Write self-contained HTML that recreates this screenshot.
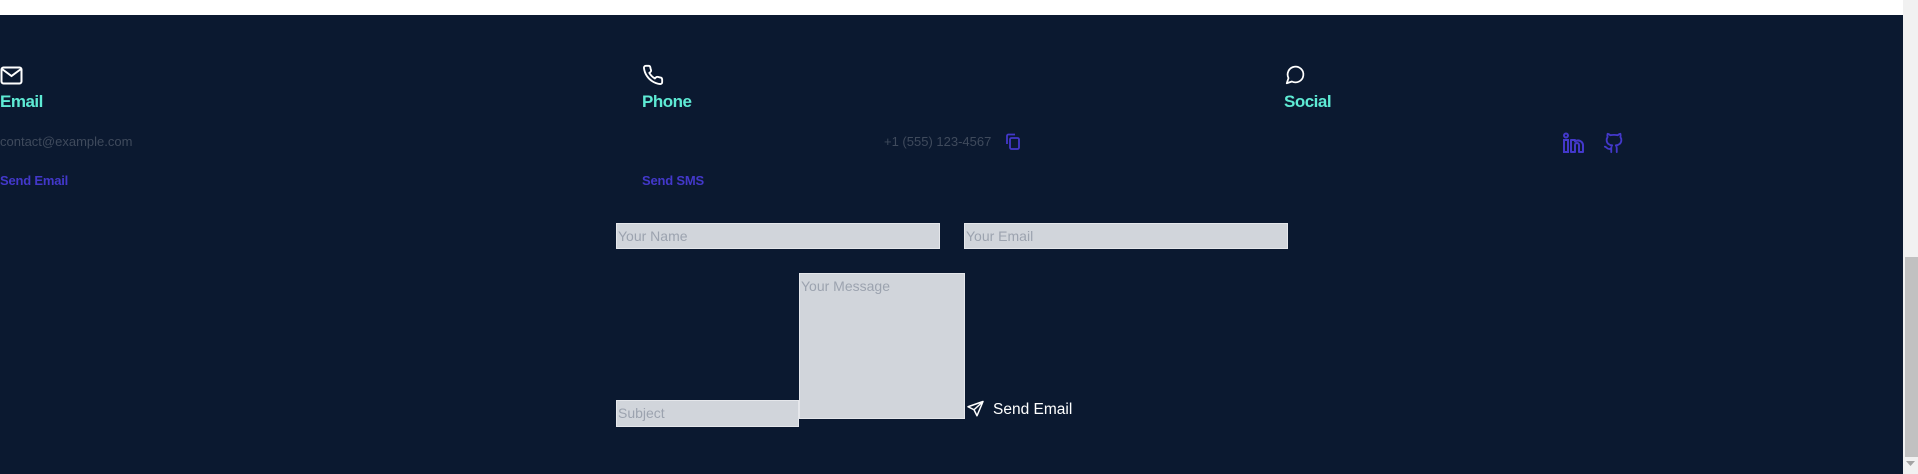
<!DOCTYPE html>
<html><head><meta charset="utf-8"><style>
*{margin:0;padding:0;box-sizing:border-box}
body{width:1918px;height:474px;overflow:hidden;background:#fff;font-family:"Liberation Sans",sans-serif;position:relative}
.dark{position:absolute;left:0;top:15px;width:1903px;height:459px;background:#0b1930}
.a{position:absolute;white-space:nowrap}
h3{position:absolute;font-size:17px;font-weight:bold;color:#5eead4;letter-spacing:-0.5px}
.sub{font-size:13px;color:#3f4a5c}
.lnk{font-size:13px;color:#4338ca;font-weight:bold;letter-spacing:-0.2px}
.inp{position:absolute;background:#d1d5db;border:1px solid #e5e7eb;color:#9ca3af;font-size:14px;padding:4px 0 0 1px}
.sb{position:absolute;left:1903px;top:0;width:15px;height:474px;background:#f1f1f1}
.th{position:absolute;left:1905px;top:257px;width:13px;height:200px;background:#c1c1c1}
</style></head><body>
<div class="dark"></div>
<svg class="a" style="left:0;top:66px" width="24" height="19" viewBox="0 0 24 19"><rect x="1.5" y="1.5" width="20" height="16" rx="2" fill="none" stroke="#fff" stroke-width="2"/><path d="M2 3l9.5 7 9.5-7" fill="none" stroke="#fff" stroke-width="2"/></svg>
<h3 style="left:0;top:92px">Email</h3>
<div class="a sub" style="left:0;top:134px">contact@example.com</div>
<div class="a lnk" style="left:0;top:173px">Send Email</div>

<svg class="a" style="left:642px;top:64px" width="22" height="22" viewBox="0 0 24 24"><path d="M22 16.9v3a2 2 0 0 1-2.2 2 19.8 19.8 0 0 1-8.6-3.1 19.5 19.5 0 0 1-6-6A19.8 19.8 0 0 1 2.1 4.2 2 2 0 0 1 4.1 2h3a2 2 0 0 1 2 1.7c.1 1 .4 1.9.7 2.8a2 2 0 0 1-.5 2.1L8 9.8a16 16 0 0 0 6 6l1.3-1.3a2 2 0 0 1 2.1-.4c.9.3 1.8.6 2.8.7a2 2 0 0 1 1.7 2z" fill="none" stroke="#fff" stroke-width="2"/></svg>
<h3 style="left:642px;top:92px">Phone</h3>
<div class="a sub" style="left:884px;top:134px">+1 (555) 123-4567</div>
<svg class="a" style="left:1005px;top:133px" width="16" height="17" viewBox="0 0 16 17"><rect x="5" y="5" width="9" height="11" rx="1.5" fill="none" stroke="#4338ca" stroke-width="1.8"/><path d="M2 11V3a1.5 1.5 0 0 1 1.5-1.5H10" fill="none" stroke="#4338ca" stroke-width="1.8"/></svg>
<div class="a lnk" style="left:642px;top:173px">Send SMS</div>

<svg class="a" style="left:1285px;top:64px" width="21" height="21" viewBox="0 0 24 24"><path d="M7.9 20A9 9 0 1 0 4 16.1L2 22z" fill="none" stroke="#fff" stroke-width="2" stroke-linejoin="round"/></svg>
<h3 style="left:1284px;top:92px">Social</h3>
<svg class="a" style="left:1562px;top:132px" width="23" height="22" viewBox="0 0 23 22"><rect x="2" y="8" width="4" height="12" fill="none" stroke="#4338ca" stroke-width="2"/><circle cx="4" cy="3.5" r="2" fill="none" stroke="#4338ca" stroke-width="2"/><path d="M9 20V8h4v1.5a5 5 0 0 1 8 3.5v7h-4v-7a2 2 0 0 0-4 0v7z" fill="none" stroke="#4338ca" stroke-width="2" stroke-linejoin="round"/></svg>
<svg class="a" style="left:1603px;top:131px" width="22" height="24" viewBox="0 0 24 24"><path d="M15 22v-4a4.8 4.8 0 0 0-1-3.5c3 0 6-2 6-5.5.1-1.3-.3-2.5-1-3.5.3-1.2.3-2.4 0-3.5 0 0-1 0-3 1.5-2.6-.5-5.4-.5-8 0C6 2 5 2 5 2c-.3 1.1-.3 2.3 0 3.5A5.4 5.4 0 0 0 4 9c0 3.5 3 5.5 6 5.5-.4.5-.7 1-.8 1.6-.2.6-.2 1.3-.2 1.900v4M9 18c-4.5 2-5-2-7-2" fill="none" stroke="#4338ca" stroke-width="2" stroke-linecap="round" stroke-linejoin="round"/></svg>

<div class="inp" style="left:616px;top:223px;width:324px;height:26px">Your Name</div>
<div class="inp" style="left:964px;top:223px;width:324px;height:26px">Your Email</div>
<div class="inp" style="left:616px;top:400px;width:183px;height:27px">Subject</div>
<div class="inp" style="left:799px;top:273px;width:166px;height:146px">Your Message</div>
<svg class="a" style="left:966px;top:400px" width="19" height="18" viewBox="0 0 24 24"><path d="M22 2L2 9l8 4 4 8zM22 2L10 13" fill="none" stroke="#fff" stroke-width="2" stroke-linejoin="round"/></svg>
<div class="a" style="left:993px;top:401px;font-size:15.5px;color:#fff">Send Email</div>

<div class="sb"></div><div class="th"></div>
<svg class="a" style="left:1906px;top:461px" width="10" height="6"><path d="M0 0h9l-4.5 5z" fill="#a3a3a3"/></svg>
</body></html>
